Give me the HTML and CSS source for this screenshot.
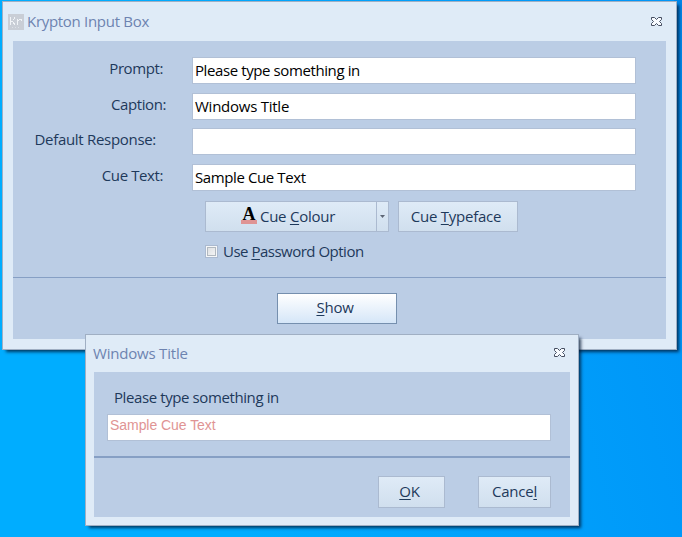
FILE: index.html
```html
<!DOCTYPE html>
<html lang="en">
<head>
<meta charset="utf-8">
<title>Krypton Input Box</title>
<link rel="stylesheet" href="styles.css">
</head>
<body>
<main class="desktop">
  <section class="window main-window">
    <header class="titlebar">
      <svg class="app-icon" width="16" height="16" viewBox="0 0 16 16" shape-rendering="crispEdges">
        <rect width="16" height="16" fill="#c9ced6"/>
        <path d="M2.500 3v8M3 7.500h2M5.500 6V5M6.500 5V3M5.500 8v2M6.500 9v2M9.500 5v6M10 6.500h1M11 5.500h3M13.500 5v2" fill="none" stroke="#f1f4f7"/>
        <path d="M4 13.500h1M7 13.500h1M10 13.500h1" stroke="#dce1e7"/>
      </svg>
      <h1 class="title">Krypton Input Box</h1>
      <svg class="close" width="11" height="9" viewBox="0 0 11 9"><path d="M.5.5h3l2 2 2-2h3v2l-2 2 2 2v2h-3l-2-2-2 2h-3v-2l2-2-2-2z" fill="#f8fbff" stroke="#454d60"/></svg>
    </header>
    <div class="body">
      <div class="form">
        <label class="label l-prompt">Prompt:</label><div class="field">Please type something in</div>
        <label class="label l-caption">Caption:</label><div class="field t-title">Windows Title</div>
        <label class="label l-default">Default Response:</label><div class="field"></div>
        <label class="label l-cue">Cue Text:</label><div class="field">Sample Cue Text</div>
      </div>
      <div class="actions">
        <div class="button split">
          <span class="split-main"><span class="font-icon">A</span><span>Cue <u>C</u>olour</span></span>
          <span class="drop"><svg width="5" height="3" viewBox="0 0 5 3"><path d="M0 0h5L2.500 3z" fill="#5d6675"/></svg></span>
        </div>
        <div class="button typeface"><span>Cue <u>T</u>ypeface</span></div>
      </div>
      <div class="option"><span class="check"></span><span class="option-text">Use <u>P</u>assword Option</span></div>
      <div class="footer"><div class="button show"><span><u>S</u>how</span></div></div>
    </div>
  </section>
  <section class="window dialog">
    <header class="titlebar">
      <h2 class="title">Windows Title</h2>
      <svg class="close" width="11" height="9" viewBox="0 0 11 9"><path d="M.5.5h3l2 2 2-2h3v2l-2 2 2 2v2h-3l-2-2-2 2h-3v-2l2-2-2-2z" fill="#f8fbff" stroke="#454d60"/></svg>
    </header>
    <div class="body">
      <p class="message">Please type something in</p>
      <div class="field cue">Sample Cue Text</div>
      <div class="footer">
        <div class="button ok"><span><u>O</u>K</span></div>
        <div class="button cancel"><span>Cance<u>l</u></span></div>
      </div>
    </div>
  </section>
</main>
</body>
</html>
```
FILE: styles.css
```css
* { box-sizing: border-box; }
body { margin: 0; font: 15px/20px "Open Sans", "Noto Sans", sans-serif; letter-spacing: -0.4px; color: #1e395b; }
.desktop { position: relative; width: 682px; height: 537px; overflow: hidden; background: linear-gradient(#0086e8, rgba(0,134,232,0) 320px) right / 8px 100% no-repeat, linear-gradient(75deg, #00adff 30%, #0096f8 90%); }
.window { position: absolute; display: flex; flex-direction: column; background: #dfebf7; border: 1px solid #a0afc3; box-shadow: 3px 3px 3px -1px rgba(0,20,45,.75); }
.main-window { left: 2px; top: 1px; width: 675px; height: 349px; padding: 0 10px 10px; }
.dialog { left: 85px; top: 334px; width: 494px; height: 192px; padding: 0 8px 8px; }
.titlebar { display: flex; align-items: center; flex: none; margin: 0 4px 0 -5px; }
.main-window .titlebar { height: 39px; }
.dialog .titlebar { height: 37px; margin: 0 5px 0 -1px; }
.app-icon { margin-right: 3px; }
.title { margin: -2px 0 0; font: inherit; letter-spacing: -0.3px; color: #6d83b0; white-space: nowrap; }
.dialog .title { letter-spacing: -0.2px; }
.close { margin-left: auto; flex: none; }
.main-window .close { margin-top: -1px; }
.dialog .close { margin-top: -3px; }
.body { flex: 1; background: #bbcde5; display: flex; flex-direction: column; }
.form { display: grid; grid-template-columns: 179px 444px; grid-template-rows: 36px 35px 36px 27px; align-items: start; padding-top: 16px; }
.label { justify-self: end; white-space: nowrap; margin-top: 1px; }
.l-prompt { margin-right: 29px; }
.l-caption { margin-right: 26px; }
.l-default { margin-right: 36px; letter-spacing: -0.3px; }
.l-cue { margin-right: 29px; }
.field { height: 27px; border: 1px solid #b1c0d6; background: #fff; color: #000; padding: 2px; white-space: nowrap; }
.t-title { letter-spacing: -0.25px; }
.actions { display: flex; gap: 9px; padding: 10px 0 0 192px; letter-spacing: -0.25px; }
.button { display: flex; align-items: center; justify-content: center; height: 31px; border: 1px solid #abbad0; background: linear-gradient(#dfebf7, #d0dfee); white-space: nowrap; padding-bottom: 2px; letter-spacing: -0.25px; }
.split { width: 184px; align-items: stretch; padding: 0; }
.split-main { flex: 1; display: flex; align-items: center; justify-content: center; gap: 3px; padding: 0 6px 2px 0; }
.font-icon { width: 16px; height: 16px; border-bottom: 4px solid #df9494; font: bold 18px/12px "Liberation Serif", serif; color: #000; text-align: center; }
.drop { width: 12px; border-left: 1px solid #abbad0; display: flex; align-items: center; justify-content: center; }
.typeface { width: 120px; padding-right: 4px; }
u { text-decoration-thickness: 1px; text-underline-offset: 2px; text-decoration-skip-ink: none; }
.option { display: flex; align-items: center; gap: 5px; margin: 9px 0 0 192px; height: 20px; white-space: nowrap; letter-spacing: -0.5px; }
.option-text { margin-top: -1px; }
.check { width: 13px; height: 13px; border: 1px solid #abbad0; background: linear-gradient(135deg, #d9dce0, #f8f8f8); box-shadow: inset 0 0 0 1px #f5f7f9, inset 0 0 0 2px #b2b9c0; }
.main-window .footer { margin-top: auto; height: 62px; border-top: 1px solid #869fc4; padding: 15px 0 0 264px; }
.show { width: 120px; padding-right: 4px; padding-bottom: 3px; border-color: #758fae; background: linear-gradient(#fff, #d5e6f8); }
.message { margin: 15px 0 7px 20px; height: 20px; white-space: nowrap; }
.cue { margin: 0 19px 0 13px; color: #df9494; font: 14px/14px "Liberation Sans", sans-serif; letter-spacing: -0.05px; padding: 3px 2px; }
.dialog .footer { margin-top: 15px; flex: 1; border-top: 2px solid #869fc4; display: flex; justify-content: flex-end; gap: 33px; padding: 18px 19px 0 0; }
.dialog .button { height: 32px; }
.ok { width: 67px; padding-right: 4px; }
.cancel { width: 73px; }
```
